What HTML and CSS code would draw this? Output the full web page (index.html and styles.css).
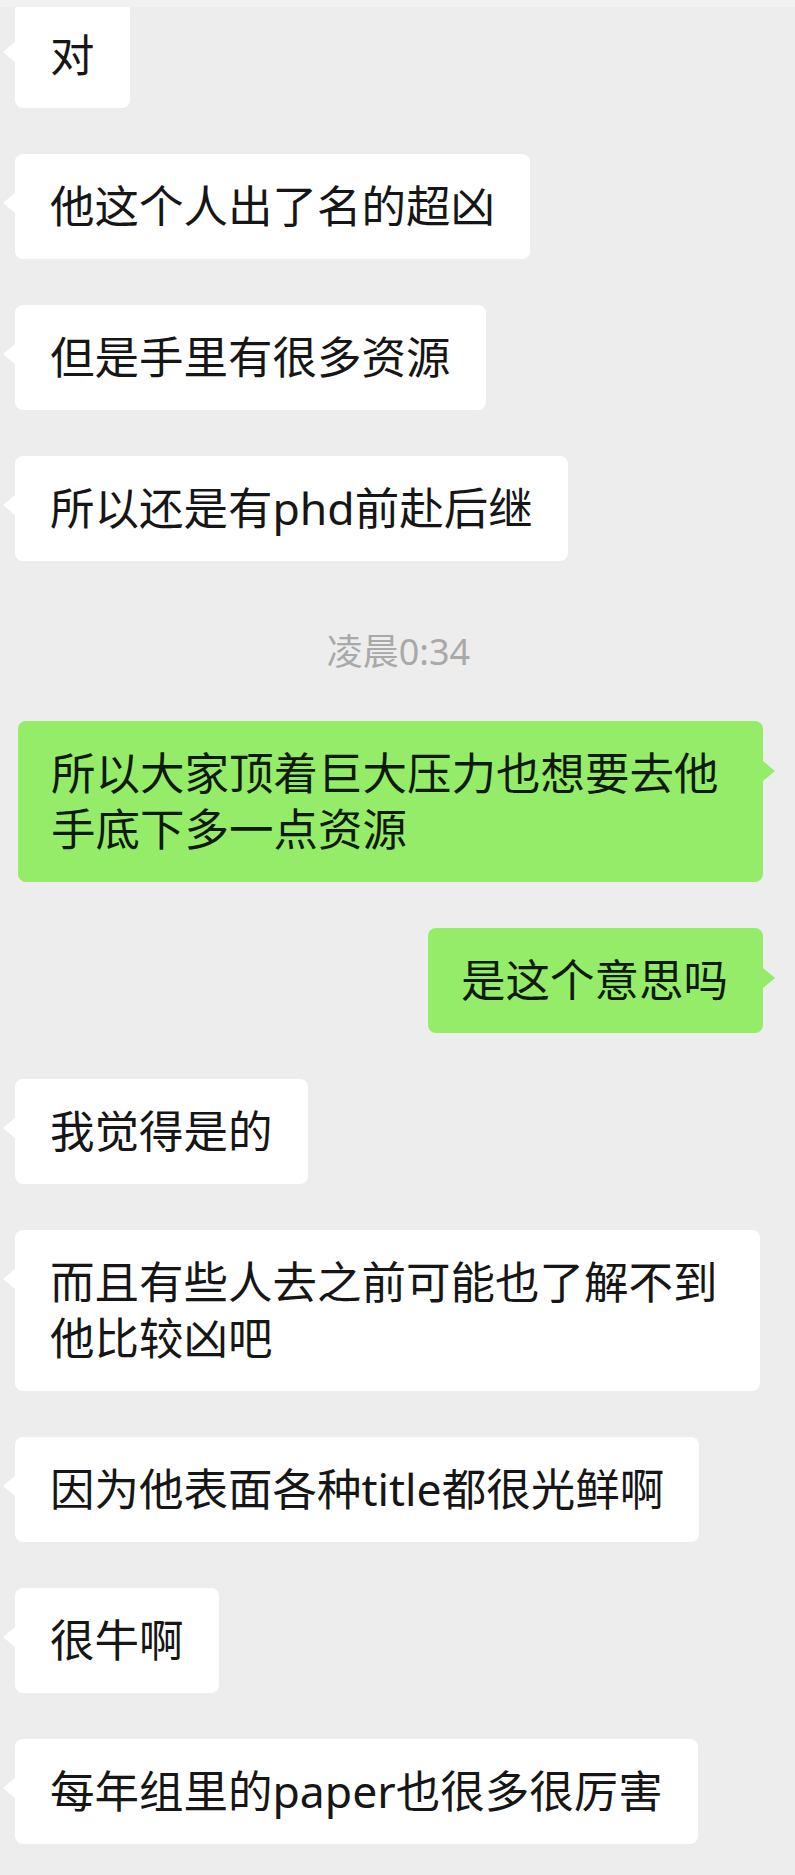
FILE: index.html
```html
<!DOCTYPE html>
<html lang="zh-CN">
<head>
<meta charset="utf-8">
<title>聊天记录</title>
<link rel="stylesheet" href="styles.css">
</head>
<body>
<div class="top-strip"></div>
<main class="chat">
  <div class="row left"><div class="bubble in">对</div></div>
  <div class="row left"><div class="bubble in">他这个人出了名的超凶</div></div>
  <div class="row left"><div class="bubble in">但是手里有很多资源</div></div>
  <div class="row left"><div class="bubble in">所以还是有phd前赴后继</div></div>
  <div class="time">凌晨0:34</div>
  <div class="row right"><div class="bubble out">所以大家顶着巨大压力也想要去他手底下多一点资源</div></div>
  <div class="row right"><div class="bubble out">是这个意思吗</div></div>
  <div class="row left"><div class="bubble in">我觉得是的</div></div>
  <div class="row left"><div class="bubble in">而且有些人去之前可能也了解不到他比较凶吧</div></div>
  <div class="row left"><div class="bubble in">因为他表面各种title都很光鲜啊</div></div>
  <div class="row left"><div class="bubble in">很牛啊</div></div>
  <div class="row left"><div class="bubble in">每年组里的paper也很多很厉害</div></div>
</main>
</body>
</html>
```

FILE: styles.css
```css
html, body {
  margin: 0;
  padding: 0;
}

body {
  background: #ededed;
  font-family: "Noto Sans", "Noto Sans CJK SC", sans-serif;
  color: #161616;
  position: relative;
  min-height: 1875px;
}

.top-strip {
  position: absolute;
  top: 0;
  left: 0;
  right: 0;
  height: 7px;
  background: #f1f1f1;
  z-index: 2;
}

.chat {
  display: flex;
  flex-direction: column;
  gap: 46px;
  padding: 3px 0 30px;
}

.row {
  display: flex;
}

.row.left {
  justify-content: flex-start;
  padding-left: 15px;
}

.row.right {
  justify-content: flex-end;
  padding-right: 32px;
}

.bubble {
  position: relative;
  box-sizing: border-box;
  max-width: 745px;
  padding: 24px 35px 25px 35px;
  font-size: 44.5px;
  line-height: 56px;
  border-radius: 8px;
  word-break: break-all;
}

.bubble.in {
  background: #ffffff;
}

.bubble.out {
  background: #95ec69;
  color: #0f1a0a;
  padding-left: 33px;
}

.bubble.in::before {
  content: "";
  position: absolute;
  left: -12px;
  top: 39px;
  border-style: solid;
  border-width: 10px 12px 10px 0;
  border-color: transparent #ffffff transparent transparent;
}

.bubble.out::after {
  content: "";
  position: absolute;
  right: -12px;
  top: 40px;
  border-style: solid;
  border-width: 10px 0 10px 12px;
  border-color: transparent transparent transparent #95ec69;
}

.time {
  align-self: center;
  margin: 25px 0 3px;
  padding-left: 2px;
  font-size: 36px;
  line-height: 40px;
  color: #a9a9a9;
}
```
